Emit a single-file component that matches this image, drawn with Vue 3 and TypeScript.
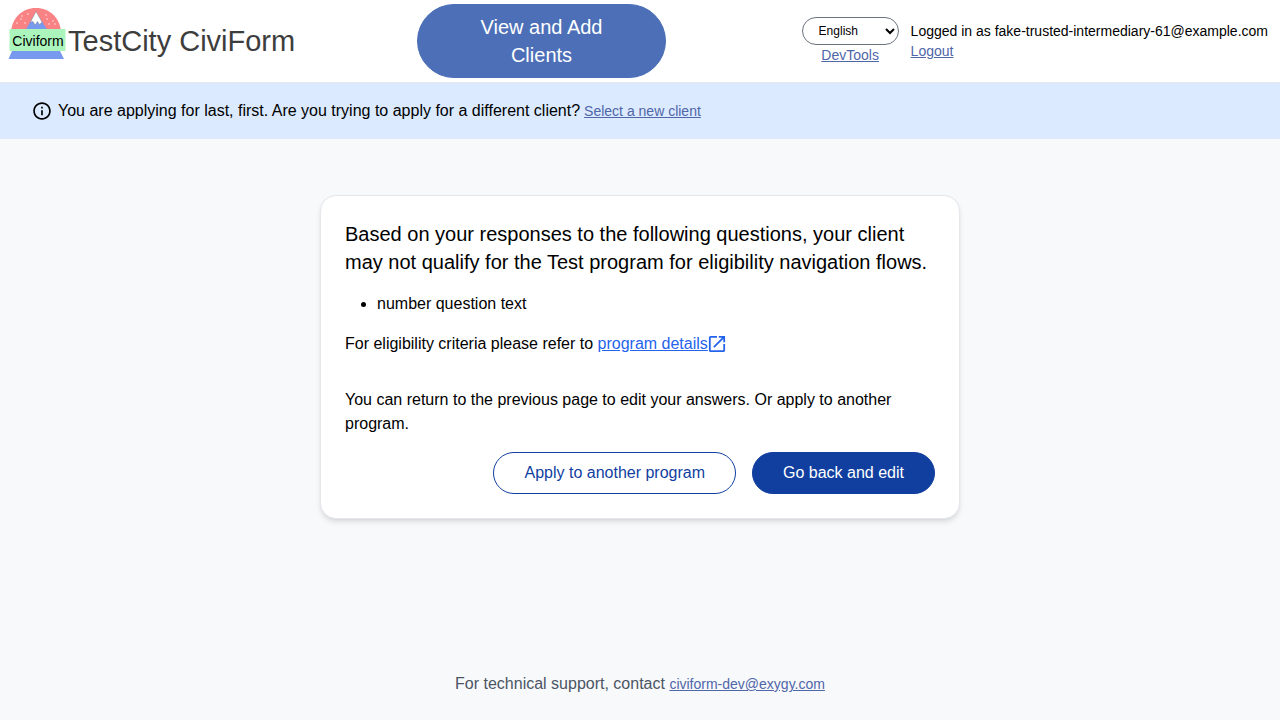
<script setup lang="ts">
import { ref } from 'vue'

const language = ref<string>('English')
const languages: string[] = ['English', 'Español', '한국어']
const questions: string[] = ['number question text']
const stars: [number, number][] = [
  [14, 12], [20, 10], [9, 19], [17, 19], [13, 15],
  [38, 11], [45, 17], [41, 20], [39, 15], [47, 20],
]
</script>

<template>
  <div class="page">
    <header class="header">
      <a class="brand" href="#">
        <svg class="logo" viewBox="0 0 60 56" role="img" aria-label="Civiform logo">
          <path d="M3 28 C4 14 14 4 28 4 C42 4 52 14 53 28 Z" fill="#f98284" />
          <g fill="#ffdede">
            <circle v-for="([x, y], i) in stars" :key="i" :cx="x" :cy="y" r="0.8" />
          </g>
          <path d="M17 27 L28 8 L40 27 Z" fill="#7799ee" />
          <path d="M28 7.500 L34 18 L31.500 20.500 L29.500 17.500 L27 21 L25 17.500 L22.500 18 Z" fill="#fff" stroke="#777" stroke-width="0.400" />
          <path d="M4 47 H52 L56 55 H0.500 Z" fill="#7799ee" />
          <rect x="1.500" y="25" width="56" height="22" fill="#abf5bd" />
          <text x="30" y="42" text-anchor="middle" class="logo-text">Civiform</text>
        </svg>
        <span class="brand-name">TestCity CiviForm</span>
      </a>
      <button class="clients" type="button">View and Add Clients</button>
      <div class="tools">
        <div class="language">
          <select v-model="language" aria-label="Language">
            <option v-for="l in languages" :key="l">{{ l }}</option>
          </select>
          <a class="link" href="#">DevTools</a>
        </div>
        <div class="account">
          <span>Logged in as fake-trusted-intermediary-61@example.com</span>
          <a class="link" href="#">Logout</a>
        </div>
      </div>
    </header>

    <div class="banner">
      <svg class="info" viewBox="0 0 24 24" aria-hidden="true">
        <path d="M11 7h2v2h-2zm0 4h2v6h-2zm1-9.500C6.200 1.500 1.500 6.200 1.500 12s4.700 10.500 10.500 10.500 10.500-4.700 10.500-10.500S17.800 1.500 12 1.500zm0 19c-4.700 0-8.500-3.800-8.500-8.500s3.800-8.500 8.500-8.500 8.500 3.800 8.500 8.500-3.800 8.500-8.500 8.500z" />
      </svg>
      <span>You are applying for last, first. Are you trying to apply for a different client?</span>
      <a class="link" href="#">Select a new client</a>
    </div>

    <main class="main">
      <section class="card">
        <h1>Based on your responses to the following questions, your client may not qualify for the Test program for eligibility navigation flows.</h1>
        <ul>
          <li v-for="q in questions" :key="q">{{ q }}</li>
        </ul>
        <p class="criteria">
          <span>For eligibility criteria please refer to&nbsp;</span>
          <a class="details" href="#">program details</a>
          <svg class="external" viewBox="2 2 20 20" aria-hidden="true">
            <path d="M19 19H5V5h7V3H5c-1.110 0-2 .9-2 2v14c0 1.100.89 2 2 2h14c1.100 0 2-.9 2-2v-7h-2v7zM14 3v2h3.590l-9.830 9.830 1.410 1.410L19 6.410V10h2V3h-7z" />
          </svg>
        </p>
        <p class="hint">You can return to the previous page to edit your answers. Or apply to another program.</p>
        <div class="actions">
          <button class="btn outline" type="button">Apply to another program</button>
          <button class="btn solid" type="button">Go back and edit</button>
        </div>
      </section>
    </main>

    <footer class="footer">
      For technical support, contact <a class="link" href="#">civiform-dev@exygy.com</a>
    </footer>
  </div>
</template>

<style>
body {
  margin: 0;
  background: #f8f9fb;
}
</style>

<style scoped>
.page {
  min-height: 100vh;
  display: flex;
  flex-direction: column;
  box-sizing: border-box;
  background: #f8f9fb;
  color: #000;
  font-family: "Liberation Sans", Arial, sans-serif;
  font-size: 16px;
  line-height: 24px;
}
.header {
  display: grid;
  grid-template-columns: 417fr 249fr 614fr;
  align-items: center;
  padding: 4px 0;
  background: #fff;
  border-bottom: 1px solid #e5e7eb;
}
.brand {
  display: flex;
  align-items: center;
  padding-left: 8px;
  color: #3d3d3d;
  text-decoration: none;
}
.logo {
  width: 60px;
  height: 56px;
  margin-bottom: 18px;
}
.logo-text {
  font-family: "Liberation Sans", Arial, sans-serif;
  font-size: 14px;
}
.brand-name {
  font-size: 29px;
  line-height: 36px;
  white-space: nowrap;
}
.clients {
  padding: 8px 48px;
  border: 1px solid #4c6fb7;
  border-radius: 37px;
  background: #4c6fb7;
  color: #fff;
  font-family: inherit;
  font-size: 20px;
  line-height: 28px;
}
.tools {
  display: flex;
  justify-content: flex-end;
  align-items: center;
  gap: 12px;
  padding-right: 12px;
  font-size: 14px;
  line-height: 20px;
}
.language {
  display: flex;
  flex-direction: column;
  align-items: center;
}
select {
  width: 97px;
  height: 28px;
  padding: 0 0 0 12px;
  border: 1px solid #6b7280;
  border-radius: 14px;
  background: #fff;
  color: #000;
  font-family: inherit;
  font-size: 12px;
}
.account {
  display: flex;
  flex-direction: column;
  align-items: flex-start;
  white-space: nowrap;
}
.link {
  color: #4f66a9;
  font-size: 14px;
  line-height: 20px;
}
.banner {
  display: flex;
  align-items: center;
  padding: 16px 32px;
  background: #dbeafe;
}
.info {
  width: 20px;
  height: 20px;
  margin-right: 6px;
}
.banner .link {
  margin-left: 4px;
}
.main {
  flex: 1;
  padding: 56px 24px;
}
.card {
  box-sizing: border-box;
  max-width: 640px;
  margin: 0 auto;
  padding: 24px;
  border: 1px solid #e5e7eb;
  border-radius: 16px;
  background: #fff;
  box-shadow: 0 4px 6px -1px rgba(0, 0, 0, 0.1), 0 2px 4px -2px rgba(0, 0, 0, 0.1);
}
h1 {
  margin: 0 0 16px;
  font-size: 20px;
  font-weight: 400;
  line-height: 28px;
}
ul {
  margin: 0 0 16px;
  padding-left: 32px;
}
.criteria {
  display: flex;
  align-items: center;
  margin: 0 0 32px;
}
.details {
  color: #2563eb;
}
.external {
  width: 18px;
  height: 18px;
  fill: #2563eb;
}
.hint {
  margin: 0 0 16px;
}
.actions {
  display: flex;
  justify-content: flex-end;
  gap: 16px;
}
.btn {
  padding: 8px 30px;
  border: 1px solid #113f9f;
  border-radius: 21px;
  font-family: inherit;
  font-size: 16px;
  line-height: 24px;
}
.outline {
  background: #fff;
  color: #113f9f;
}
.solid {
  background: #113f9f;
  color: #fff;
}
.footer {
  padding: 0 16px 24px;
  color: #4b5563;
  text-align: center;
}
</style>
